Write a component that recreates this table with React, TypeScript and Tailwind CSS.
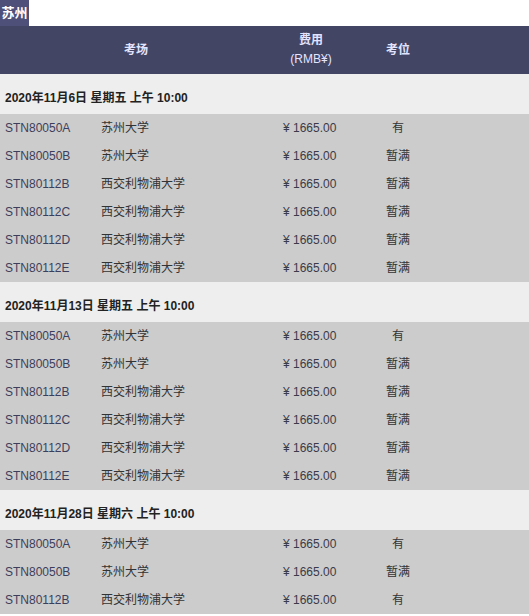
import React from 'react';

type Row = { code: string; venue: string; fee: string; seat: string };
type Session = { date: string; rows: Row[] };

const SOOCHOW = '苏州大学';
const XJTLU = '西交利物浦大学';

const sessions: Session[] = [
  {
    date: '2020年11月6日 星期五 上午 10:00',
    rows: [
      { code: 'STN80050A', venue: SOOCHOW, fee: '1665.00', seat: '有' },
      { code: 'STN80050B', venue: SOOCHOW, fee: '1665.00', seat: '暂满' },
      { code: 'STN80112B', venue: XJTLU, fee: '1665.00', seat: '暂满' },
      { code: 'STN80112C', venue: XJTLU, fee: '1665.00', seat: '暂满' },
      { code: 'STN80112D', venue: XJTLU, fee: '1665.00', seat: '暂满' },
      { code: 'STN80112E', venue: XJTLU, fee: '1665.00', seat: '暂满' },
    ],
  },
  {
    date: '2020年11月13日 星期五 上午 10:00',
    rows: [
      { code: 'STN80050A', venue: SOOCHOW, fee: '1665.00', seat: '有' },
      { code: 'STN80050B', venue: SOOCHOW, fee: '1665.00', seat: '暂满' },
      { code: 'STN80112B', venue: XJTLU, fee: '1665.00', seat: '暂满' },
      { code: 'STN80112C', venue: XJTLU, fee: '1665.00', seat: '暂满' },
      { code: 'STN80112D', venue: XJTLU, fee: '1665.00', seat: '暂满' },
      { code: 'STN80112E', venue: XJTLU, fee: '1665.00', seat: '暂满' },
    ],
  },
  {
    date: '2020年11月28日 星期六 上午 10:00',
    rows: [
      { code: 'STN80050A', venue: SOOCHOW, fee: '1665.00', seat: '有' },
      { code: 'STN80050B', venue: SOOCHOW, fee: '1665.00', seat: '暂满' },
      { code: 'STN80112B', venue: XJTLU, fee: '1665.00', seat: '有' },
    ],
  },
];

const cols = 'grid grid-cols-[96px_176px_78px_96px_1fr]';

export default function App() {
  return (
    <div
      className="w-[529px] h-[616px] overflow-hidden bg-white text-[12px]"
      style={{ fontFamily: '"Liberation Sans", Arial, "Noto Sans CJK SC", sans-serif' }}
    >
      <div className="flex">
        <div className="w-[29px] h-[26px] bg-[#4e5079] text-white font-bold text-[13px] flex items-center justify-center">
          苏州
        </div>
      </div>

      <div className={`${cols} h-12 bg-[#434564] text-[#e2e4ff] font-bold items-center`}>
        <div className="col-span-2 text-center">考场</div>
        <div className="text-center leading-[19px] font-normal">
          <div className="font-bold">费用</div>
          <div>(RMB¥)</div>
        </div>
        <div className="text-center">考位</div>
        <div />
      </div>

      {sessions.map((s) => (
        <div key={s.date}>
          <div className="h-10 bg-[#eeeeee] pt-4 pl-[5px] leading-4 font-bold text-[#222]">{s.date}</div>
          {s.rows.map((r) => (
            <div key={r.code} className={`${cols} h-7 bg-[#cccccc] items-center text-[#333]`}>
              <div className="pl-[5px] text-[#3d3e5c]">{r.code}</div>
              <div className="pl-[5px]">{r.venue}</div>
              <div className="pl-[11px] text-[#3a3a48]">¥ {r.fee}</div>
              <div className="text-center">{r.seat}</div>
              <div />
            </div>
          ))}
        </div>
      ))}
    </div>
  );
}
